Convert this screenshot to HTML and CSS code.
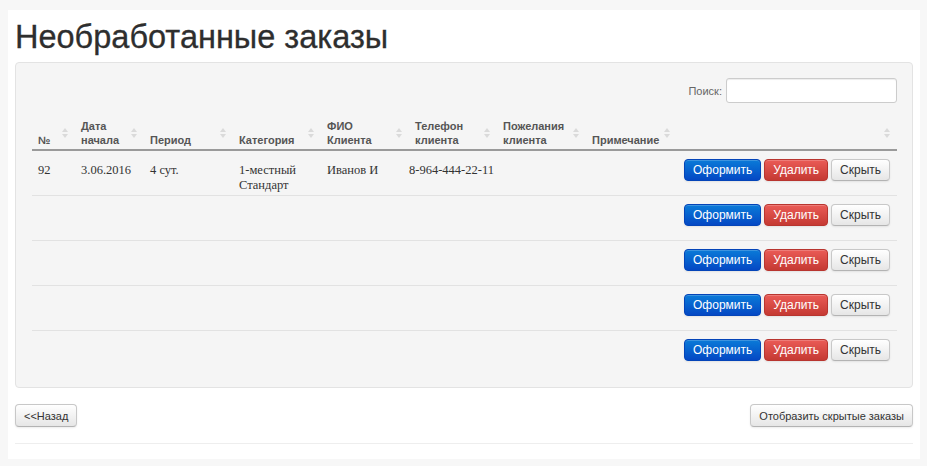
FILE: index.html
```html
<html lang="ru">

<head>
    <meta charset="UTF-8">
    <meta name="viewport" content="width=device-width, initial-scale=1.0">
    <title>Необработанные заказы</title>
    <link rel="stylesheet" href="styles.css">
</head>

<body>
    <div class="page">
        <h1>Необработанные заказы</h1>

        <div class="well">
            <div class="search">
                <label for="search">Поиск:</label>
                <input id="search" type="text">
            </div>

            <table class="orders">
                <thead>
                    <tr>
                        <th class="c-num"><div class="th-in"><span>№</span><i class="sort"></i></div></th>
                        <th class="c-date"><div class="th-in"><span>Дата<br>начала</span><i class="sort"></i></div></th>
                        <th class="c-period"><div class="th-in"><span>Период</span><i class="sort"></i></div></th>
                        <th class="c-cat"><div class="th-in"><span>Категория</span><i class="sort"></i></div></th>
                        <th class="c-name"><div class="th-in"><span>ФИО<br>Клиента</span><i class="sort"></i></div></th>
                        <th class="c-phone"><div class="th-in"><span>Телефон<br>клиента</span><i class="sort"></i></div></th>
                        <th class="c-wish"><div class="th-in"><span>Пожелания<br>клиента</span><i class="sort"></i></div></th>
                        <th class="c-note"><div class="th-in"><span>Примечание</span><i class="sort"></i></div></th>
                        <th class="c-act"><div class="th-in"><span></span><i class="sort"></i></div></th>
                    </tr>
                </thead>
                <tbody>
                    <tr>
                        <td>92</td>
                        <td>3.06.2016</td>
                        <td>4 сут.</td>
                        <td>1-местный<br>Стандарт</td>
                        <td>Иванов И</td>
                        <td class="phone">8-964-444-22-11</td>
                        <td></td>
                        <td></td>
                        <td class="actions">
                            <button class="btn btn-primary">Оформить</button>
                            <button class="btn btn-danger">Удалить</button>
                            <button class="btn">Скрыть</button>
                        </td>
                    </tr>
                    <tr>
                        <td></td><td></td><td></td><td></td><td></td><td></td><td></td><td></td>
                        <td class="actions">
                            <button class="btn btn-primary">Оформить</button>
                            <button class="btn btn-danger">Удалить</button>
                            <button class="btn">Скрыть</button>
                        </td>
                    </tr>
                    <tr>
                        <td></td><td></td><td></td><td></td><td></td><td></td><td></td><td></td>
                        <td class="actions">
                            <button class="btn btn-primary">Оформить</button>
                            <button class="btn btn-danger">Удалить</button>
                            <button class="btn">Скрыть</button>
                        </td>
                    </tr>
                    <tr>
                        <td></td><td></td><td></td><td></td><td></td><td></td><td></td><td></td>
                        <td class="actions">
                            <button class="btn btn-primary">Оформить</button>
                            <button class="btn btn-danger">Удалить</button>
                            <button class="btn">Скрыть</button>
                        </td>
                    </tr>
                    <tr>
                        <td></td><td></td><td></td><td></td><td></td><td></td><td></td><td></td>
                        <td class="actions">
                            <button class="btn btn-primary">Оформить</button>
                            <button class="btn btn-danger">Удалить</button>
                            <button class="btn">Скрыть</button>
                        </td>
                    </tr>
                </tbody>
            </table>
        </div>

        <div class="footer">
            <button class="btn btn-lg">&lt;&lt;Назад</button>
            <button class="btn btn-lg">Отобразить скрытые заказы</button>
        </div>

        <hr>
    </div>
</body>

</html>
```

FILE: styles.css
```css
body {
    margin: 0;
    padding: 10px 7px 6px 8px;
    background: #f7f7f7;
    font-family: 'Liberation Sans', Arial, sans-serif;
    color: #333;
}

.page {
    background: #fff;
    padding: 9px 7px 15px 7px;
}

h1 {
    margin: 0 0 7px 0;
    font-size: 32.5px;
    line-height: 36px;
    font-weight: normal;
    color: #2e2e2e;
    -webkit-text-stroke: 0.3px #2e2e2e;
}

.well {
    background: #f5f5f5;
    border: 1px solid #e3e3e3;
    border-radius: 4px;
    padding: 15px 15px 12px 16px;
}

.search {
    display: flex;
    justify-content: flex-end;
    align-items: center;
    gap: 4px;
    font-size: 11px;
    color: #666;
}

.search input {
    width: 171px;
    height: 25px;
    box-sizing: border-box;
    border: 1px solid #ccc;
    border-radius: 3px;
    background: #fff;
    box-shadow: inset 0 1px 1px rgba(0, 0, 0, 0.075);
}

.orders {
    width: 100%;
    margin-top: 10px;
    border-collapse: collapse;
    table-layout: fixed;
}

.orders th {
    box-sizing: border-box;
    padding: 6px 7px 2px 6px;
    border-bottom: 2px solid #9a9a9a;
    font-size: 11px;
    line-height: 14px;
    font-weight: bold;
    color: #555;
    text-align: left;
    vertical-align: bottom;
}

.th-in {
    display: flex;
    justify-content: space-between;
    align-items: flex-end;
    height: 28px;
}

/* sort arrows: a small up triangle over a down one */
.sort {
    align-self: center;
    display: flex;
    flex-direction: column;
    gap: 2px;
    flex: none;
}

.sort::before,
.sort::after {
    content: "";
    width: 0;
    height: 0;
    border-left: 3px solid transparent;
    border-right: 3px solid transparent;
}

.sort::before {
    border-bottom: 4px solid #dadada;
}

.sort::after {
    border-top: 4px solid #dadada;
}

.c-num { width: 43px; }
.c-date { width: 69px; }
.c-period { width: 89px; }
.c-cat { width: 88px; }
.c-name { width: 88px; }
.c-phone { width: 88px; }
.c-wish { width: 89px; }
.c-note { width: 91px; }

.orders td {
    box-sizing: border-box;
    padding: 12px 6px 1px 6px;
    border-top: 1px solid #e2e2e2;
    font-family: 'Liberation Serif', 'Times New Roman', serif;
    font-size: 12.5px;
    line-height: 15px;
    color: #333;
    vertical-align: top;
    white-space: nowrap;
}

.orders tbody tr:first-child td {
    border-top: none;
}

.orders td.phone {
    padding-left: 0;
}

.orders td.actions {
    padding: 8px 6px 14px 7px;
    text-align: left;
    font-size: 0;
}

.btn {
    height: 22px;
    padding: 0 8px;
    border: 1px solid #c8c8c8;
    border-bottom-color: #b3b3b3;
    border-radius: 4px;
    background: linear-gradient(#ffffff, #e6e6e6);
    box-shadow: inset 0 1px 0 rgba(255, 255, 255, 0.2), 0 1px 2px rgba(0, 0, 0, 0.08);
    font-family: 'Liberation Sans', Arial, sans-serif;
    font-size: 12px;
    color: #333;
    vertical-align: top;
}

.actions .btn + .btn {
    margin-left: 3px;
}

.btn-primary {
    background: linear-gradient(#0a7bd8, #0448c4);
    border-color: #0444b8;
    color: #fff;
}

.btn-danger {
    background: linear-gradient(#ea5b56, #c53a33);
    border-color: #b8352f;
    color: #fff;
}

.footer {
    display: flex;
    justify-content: space-between;
    margin-top: 16px;
}

.footer .btn {
    height: 23px;
    padding: 0 8px;
    font-size: 11px;
}

hr {
    margin: 16px 0 0 0;
    border: none;
    border-top: 1px solid #eee;
}
```
